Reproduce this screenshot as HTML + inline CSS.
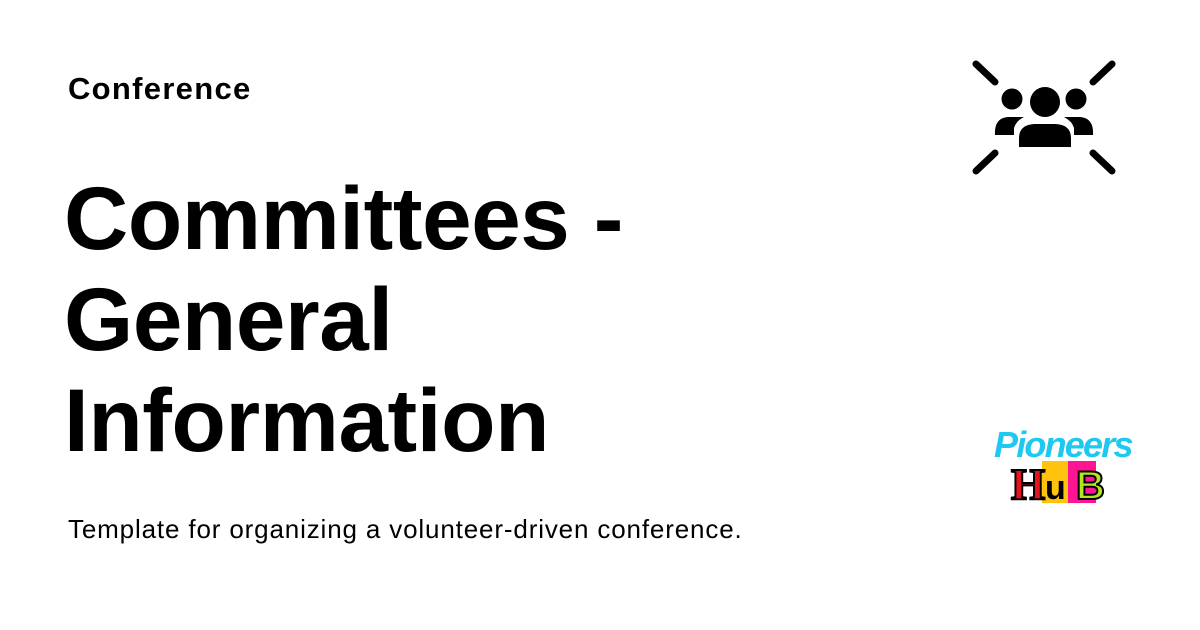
<!DOCTYPE html>
<html><head><meta charset="utf-8"><style>
body{margin:0;width:1200px;height:630px;background:#fff;font-family:"Liberation Sans",sans-serif;color:#000;position:relative;overflow:hidden}
.k{position:absolute;left:68px;top:71px;font-size:31px;font-weight:bold;letter-spacing:1.3px}
.t{position:absolute;left:64px;top:168px;font-size:89px;font-weight:bold;line-height:101px;letter-spacing:-0.4px}
.s{position:absolute;left:68px;top:514px;font-size:26px;letter-spacing:0.85px}
</style></head><body>
<div class="k">Conference</div>
<div class="t">Committees -<br>General<br>Information</div>
<div class="s">Template for organizing a volunteer-driven conference.</div>
<svg style="position:absolute;left:0;top:0" width="1200" height="630">
<g stroke="#000" stroke-width="7" stroke-linecap="round">
<line x1="976" y1="64" x2="995" y2="82"/><line x1="1112" y1="64" x2="1093" y2="82"/>
<line x1="976" y1="171" x2="995" y2="153"/><line x1="1112" y1="171" x2="1093" y2="153"/>
</g>
<circle cx="1012" cy="99" r="10.5"/><circle cx="1045" cy="102" r="15"/><circle cx="1076" cy="99" r="10.5"/>
<path d="M1019 147 V138 Q1019 125 1034 124 H1056 Q1071 125 1071 138 V147 Z"/>
<path d="M995 135 Q994 118 1008 117 H1024 Q1016 121 1014 128 V135 Z"/>
<path d="M1093 135 Q1094 118 1080 117 H1064 Q1072 121 1074 128 V135 Z"/>
<text x="994" y="457" font-family="Liberation Sans" font-style="italic" font-weight="bold" font-size="36" fill="#1ec8f0" letter-spacing="-1.5" textLength="138">Pioneers</text>
<rect x="1042" y="461" width="26" height="42" fill="#ffc20e"/><rect x="1068" y="461" width="28" height="42" fill="#ff1493"/>
<text x="1011" y="499" font-family="Liberation Serif" font-weight="bold" font-size="44" fill="#e8141c" stroke="#000" stroke-width="2">H</text>
<text x="1045" y="499" font-family="Liberation Sans" font-weight="bold" font-size="34" fill="#000">u</text>
<text x="1076" y="499" font-family="Liberation Sans" font-weight="bold" font-size="40" fill="#b5e61d" stroke="#000" stroke-width="2">B</text>
</svg>
</body></html>
